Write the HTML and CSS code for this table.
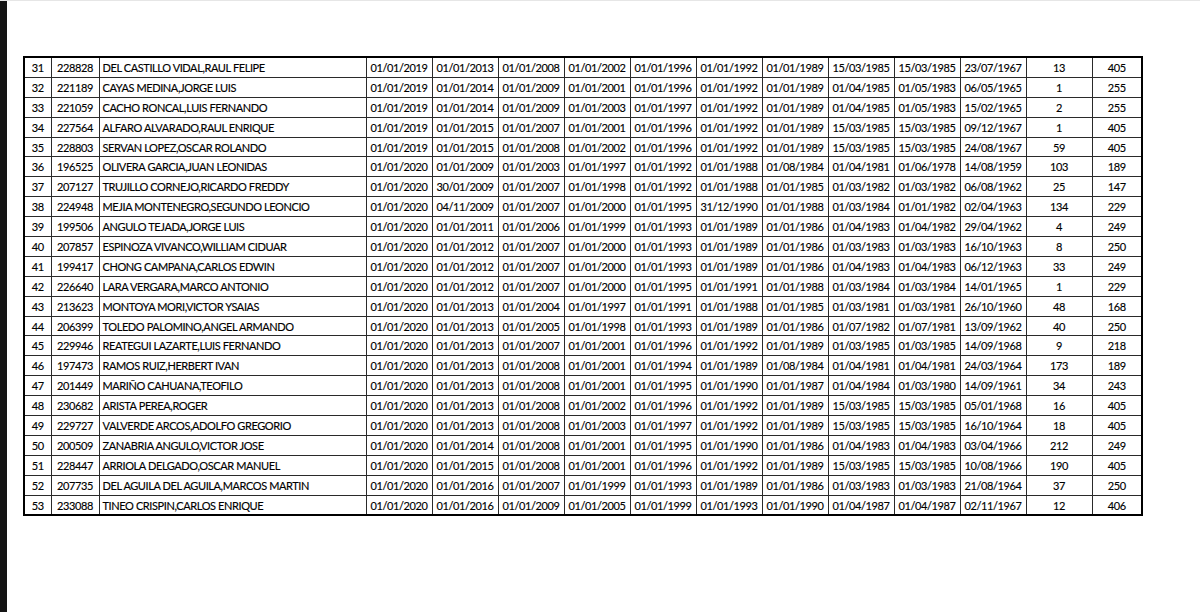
FILE: index.html
```html
<!DOCTYPE html>
<html lang="es">
<head>
<meta charset="utf-8">
<title>Tabla</title>
<link rel="stylesheet" href="styles.css">
</head>
<body>
<div class="page">
  <div class="edge"></div>
  <div class="sheet">
    <table class="grid">
      <colgroup>
        <col class="c-num"><col class="c-code"><col class="c-name">
        <col class="c-date"><col class="c-date"><col class="c-date"><col class="c-date"><col class="c-date">
        <col class="c-date"><col class="c-date"><col class="c-date"><col class="c-date"><col class="c-date">
        <col class="c-n1"><col class="c-n2">
      </colgroup>
      <tbody id="rows"></tbody>
    </table>
  </div>
</div>
<script src="script.js"></script>
</body>
</html>
```

FILE: script.js
```js
const data = [
["31","228828","DEL CASTILLO VIDAL,RAUL FELIPE","01/01/2019 01/01/2013 01/01/2008 01/01/2002 01/01/1996 01/01/1992 01/01/1989 15/03/1985 15/03/1985 23/07/1967","13","405"],
["32","221189","CAYAS MEDINA,JORGE LUIS","01/01/2019 01/01/2014 01/01/2009 01/01/2001 01/01/1996 01/01/1992 01/01/1989 01/04/1985 01/05/1983 06/05/1965","1","255"],
["33","221059","CACHO RONCAL,LUIS FERNANDO","01/01/2019 01/01/2014 01/01/2009 01/01/2003 01/01/1997 01/01/1992 01/01/1989 01/04/1985 01/05/1983 15/02/1965","2","255"],
["34","227564","ALFARO ALVARADO,RAUL ENRIQUE","01/01/2019 01/01/2015 01/01/2007 01/01/2001 01/01/1996 01/01/1992 01/01/1989 15/03/1985 15/03/1985 09/12/1967","1","405"],
["35","228803","SERVAN LOPEZ,OSCAR ROLANDO","01/01/2019 01/01/2015 01/01/2008 01/01/2002 01/01/1996 01/01/1992 01/01/1989 15/03/1985 15/03/1985 24/08/1967","59","405"],
["36","196525","OLIVERA GARCIA,JUAN LEONIDAS","01/01/2020 01/01/2009 01/01/2003 01/01/1997 01/01/1992 01/01/1988 01/08/1984 01/04/1981 01/06/1978 14/08/1959","103","189"],
["37","207127","TRUJILLO CORNEJO,RICARDO FREDDY","01/01/2020 30/01/2009 01/01/2007 01/01/1998 01/01/1992 01/01/1988 01/01/1985 01/03/1982 01/03/1982 06/08/1962","25","147"],
["38","224948","MEJIA MONTENEGRO,SEGUNDO LEONCIO","01/01/2020 04/11/2009 01/01/2007 01/01/2000 01/01/1995 31/12/1990 01/01/1988 01/03/1984 01/01/1982 02/04/1963","134","229"],
["39","199506","ANGULO TEJADA,JORGE LUIS","01/01/2020 01/01/2011 01/01/2006 01/01/1999 01/01/1993 01/01/1989 01/01/1986 01/04/1983 01/04/1982 29/04/1962","4","249"],
["40","207857","ESPINOZA VIVANCO,WILLIAM CIDUAR","01/01/2020 01/01/2012 01/01/2007 01/01/2000 01/01/1993 01/01/1989 01/01/1986 01/03/1983 01/03/1983 16/10/1963","8","250"],
["41","199417","CHONG CAMPANA,CARLOS EDWIN","01/01/2020 01/01/2012 01/01/2007 01/01/2000 01/01/1993 01/01/1989 01/01/1986 01/04/1983 01/04/1983 06/12/1963","33","249"],
["42","226640","LARA VERGARA,MARCO ANTONIO","01/01/2020 01/01/2012 01/01/2007 01/01/2000 01/01/1995 01/01/1991 01/01/1988 01/03/1984 01/03/1984 14/01/1965","1","229"],
["43","213623","MONTOYA MORI,VICTOR YSAIAS","01/01/2020 01/01/2013 01/01/2004 01/01/1997 01/01/1991 01/01/1988 01/01/1985 01/03/1981 01/03/1981 26/10/1960","48","168"],
["44","206399","TOLEDO PALOMINO,ANGEL ARMANDO","01/01/2020 01/01/2013 01/01/2005 01/01/1998 01/01/1993 01/01/1989 01/01/1986 01/07/1982 01/07/1981 13/09/1962","40","250"],
["45","229946","REATEGUI LAZARTE,LUIS FERNANDO","01/01/2020 01/01/2013 01/01/2007 01/01/2001 01/01/1996 01/01/1992 01/01/1989 01/03/1985 01/03/1985 14/09/1968","9","218"],
["46","197473","RAMOS RUIZ,HERBERT IVAN","01/01/2020 01/01/2013 01/01/2008 01/01/2001 01/01/1994 01/01/1989 01/08/1984 01/04/1981 01/04/1981 24/03/1964","173","189"],
["47","201449","MARIÑO CAHUANA,TEOFILO","01/01/2020 01/01/2013 01/01/2008 01/01/2001 01/01/1995 01/01/1990 01/01/1987 01/04/1984 01/03/1980 14/09/1961","34","243"],
["48","230682","ARISTA PEREA,ROGER","01/01/2020 01/01/2013 01/01/2008 01/01/2002 01/01/1996 01/01/1992 01/01/1989 15/03/1985 15/03/1985 05/01/1968","16","405"],
["49","229727","VALVERDE ARCOS,ADOLFO GREGORIO","01/01/2020 01/01/2013 01/01/2008 01/01/2003 01/01/1997 01/01/1992 01/01/1989 15/03/1985 15/03/1985 16/10/1964","18","405"],
["50","200509","ZANABRIA ANGULO,VICTOR JOSE","01/01/2020 01/01/2014 01/01/2008 01/01/2001 01/01/1995 01/01/1990 01/01/1986 01/04/1983 01/04/1983 03/04/1966","212","249"],
["51","228447","ARRIOLA DELGADO,OSCAR MANUEL","01/01/2020 01/01/2015 01/01/2008 01/01/2001 01/01/1996 01/01/1992 01/01/1989 15/03/1985 15/03/1985 10/08/1966","190","405"],
["52","207735","DEL AGUILA DEL AGUILA,MARCOS MARTIN","01/01/2020 01/01/2016 01/01/2007 01/01/1999 01/01/1993 01/01/1989 01/01/1986 01/03/1983 01/03/1983 21/08/1964","37","250"],
["53","233088","TINEO CRISPIN,CARLOS ENRIQUE","01/01/2020 01/01/2016 01/01/2009 01/01/2005 01/01/1999 01/01/1993 01/01/1990 01/04/1987 01/04/1987 02/11/1967","12","406"]
];
const tbody = document.getElementById("rows");
for (const r of data) {
  const tr = document.createElement("tr");
  const cells = [[r[0], "num"], [r[1], "code"], [r[2], "name"]];
  for (const d of r[3].split(" ")) cells.push([d, "date"]);
  cells.push([r[4], "n1"], [r[5], "n2"]);
  for (const [t, c] of cells) {
    const td = document.createElement("td");
    td.className = c;
    td.textContent = t;
    tr.appendChild(td);
  }
  tbody.appendChild(tr);
}
```

FILE: styles.css
```css
html, body {
  margin: 0;
  padding: 0;
  background: #ffffff;
}
.page {
  display: flex;
  width: 1200px;
  height: 612px;
  overflow: hidden;
  border-top: 1px solid #e6e6e6;
  box-sizing: border-box;
}
.edge {
  width: 7px;
  flex: 0 0 7px;
  background: #141414;
}
.sheet {
  flex: 1;
  padding: 55px 0 0 16px;
}
.grid {
  border-collapse: collapse;
  table-layout: fixed;
  width: 1118px;
  border: 2px solid #000;
  font-family: Lato, "Open Sans", sans-serif;
  font-size: 11px;
  letter-spacing: -0.4px;
  color: #000;
  -webkit-text-stroke: 0.15px #000;
}
.c-num { width: 27px; }
.c-code { width: 48px; }
.c-name { width: 267px; }
.c-date { width: 66px; }
.c-n1 { width: 66px; }
.c-n2 { width: 50px; }
.grid td {
  border: 1px solid #2a2a2a;
  height: 18.9px;
  padding: 0;
  text-align: center;
  white-space: nowrap;
  overflow: hidden;
  line-height: 1;
}
.grid td.name {
  text-align: left;
  padding-left: 3px;
}
```
